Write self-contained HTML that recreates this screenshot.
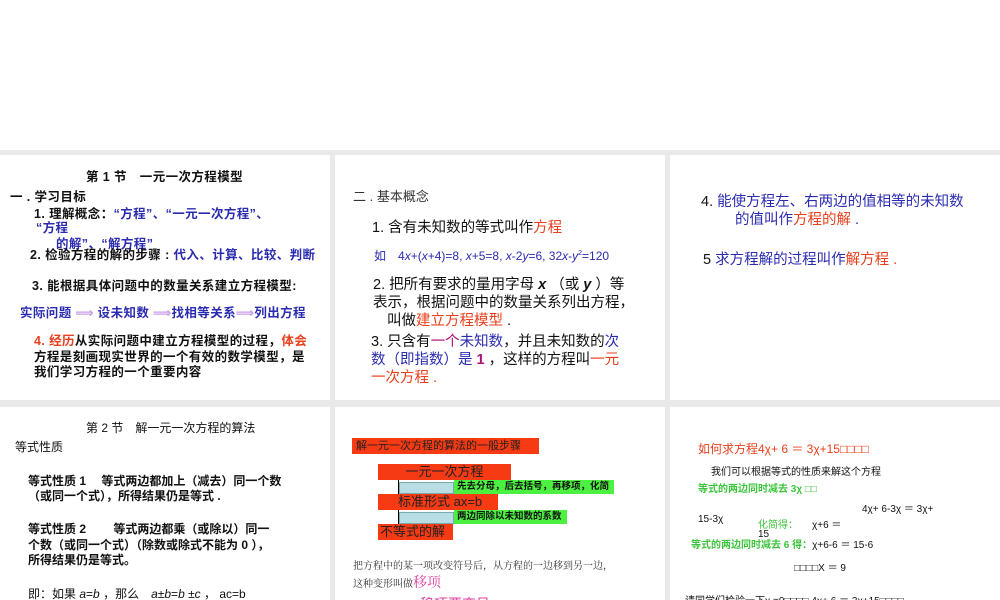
<!DOCTYPE html>
<html><head><meta charset="utf-8"><style>
*{margin:0;padding:0;box-sizing:border-box}
html,body{width:1000px;height:600px;overflow:hidden}
body{position:relative;background:#fff;font-family:"Liberation Sans","Noto Sans CJK SC",sans-serif;}
.bg{position:absolute;left:0;top:150px;width:1000px;height:450px;background:#e9e9e9}
.p{position:absolute;background:#fff;overflow:hidden}
.t{position:absolute;white-space:nowrap;color:#111}
.b{font-weight:bold}
.bl{color:#2b2bb0}
.rd{color:#e8401c}
.gr{color:#3cc43c}
.box{position:absolute;background:#f53a14;color:#222;white-space:nowrap}
.gbox{position:absolute;background:#4cf040;color:#111;font-weight:bold;font-size:9.5px;white-space:nowrap;padding-left:3px;line-height:14px}
.arr{position:absolute;height:12px;background:#b8dde4;border:1px solid #7aa}
.p1 .t{font-size:12.5px;letter-spacing:0.4px}
</style></head><body>
<div class="bg"></div>
<div class="p p1" style="left:0;top:155px;width:330px;height:245px">
<div class="t b" style="left:86px;top:11px">第 1 节　一元一次方程模型</div>
<div class="t b" style="left:10px;top:31px">一 . 学习目标</div>
<div class="t b" style="left:34px;top:48px">1. 理解概念：<span class="bl">“方程”、“一元一次方程”、</span></div>
<div class="t b bl" style="left:36px;top:62px">“方程</div>
<div class="t b bl" style="left:56px;top:78px">的解”、“解方程”</div>
<div class="t b" style="left:30px;top:89px">2. 检验方程的解的步骤 : <span class="bl">代入、计算、比较、判断</span></div>
<div class="t b" style="left:32px;top:120px">3. 能根据具体问题中的数量关系建立方程模型:</div>
<div class="t b bl" style="left:20px;top:147px">实际问题 <span style="color:#c8a0e8">⟹</span> 设未知数 <span style="color:#c8a0e8">⟹</span>找相等关系<span style="color:#c8a0e8">⟹</span>列出方程</div>
<div class="t b" style="left:34px;top:175px"><span class="rd">4. 经历</span>从实际问题中建立方程模型的过程，<span class="rd">体会</span></div>
<div class="t b" style="left:34px;top:191px">方程是刻画现实世界的一个有效的数学模型，是</div>
<div class="t b" style="left:34px;top:206px">我们学习方程的一个重要内容</div>
</div>
<div class="p" style="left:335px;top:155px;width:330px;height:245px"></div>
<div class="p" style="left:670px;top:155px;width:330px;height:245px"></div>
<div class="p" style="left:0;top:407px;width:330px;height:193px"></div>
<div class="p" style="left:335px;top:407px;width:330px;height:193px"></div>
<div class="p" style="left:670px;top:407px;width:330px;height:193px"></div>

<!-- panel 2 -->
<div class="t" style="left:353px;top:186px;font-size:13px;color:#333">二 . 基本概念</div>
<div class="t" style="left:372px;top:216px;font-size:14.5px">1. 含有未知数的等式叫作<span class="rd">方程</span></div>
<div class="t bl" style="left:374px;top:247px;font-size:12px">如　4<i>x</i>+(<i>x</i>+4)=8, <i>x</i>+5=8, <i>x</i>-2<i>y</i>=6, 32<i>x</i>-<i>y</i><sup style="font-size:7px">2</sup>=120</div>
<div class="t" style="left:373px;top:273px;font-size:14.5px">2. 把所有要求的量用字母 <b><i>x</i></b> （或 <b><i>y</i></b> ）等</div>
<div class="t" style="left:373px;top:291px;font-size:14.5px">表示，根据问题中的数量关系列出方程，</div>
<div class="t" style="left:387px;top:309px;font-size:14.5px">叫做<span class="rd">建立方程模型</span> .</div>
<div class="t" style="left:371px;top:330px;font-size:14.5px">3. 只含有<span style="color:#b0107a">一个</span><span class="bl">未知数</span>，并且未知数的<span class="bl">次</span></div>
<div class="t" style="left:371px;top:348px;font-size:14.5px"><span class="bl">数（即指数）是</span> <b style="color:#b0107a">1</b> ，这样的方程叫<span class="rd">一元</span></div>
<div class="t rd" style="left:371px;top:366px;font-size:14.5px">一次方程 .</div>

<!-- panel 3 -->
<div class="t" style="left:701px;top:190px;font-size:14.5px">4. <span class="bl">能使方程左、右两边的值相等的未知数</span></div>
<div class="t bl" style="left:735px;top:208px;font-size:14.5px">的值叫作<span class="rd">方程的解</span> .</div>
<div class="t" style="left:703px;top:248px;font-size:14.5px">5 <span class="bl">求方程解的过程叫作</span><span class="rd">解方程 .</span></div>

<!-- panel 4 -->
<div class="t" style="left:86px;top:419px;font-size:12px">第 2 节　解一元一次方程的算法</div>
<div class="t" style="left:15px;top:438px;font-size:12px">等式性质</div>
<div class="t b" style="left:28px;top:472px;font-size:12px">等式性质 1　 等式两边都加上（减去）同一个数</div>
<div class="t b" style="left:28px;top:487px;font-size:12px">（或同一个式），所得结果仍是等式 .</div>
<div class="t b" style="left:28px;top:520px;font-size:12px">等式性质 2　　 等式两边都乘（或除以）同一</div>
<div class="t b" style="left:28px;top:536px;font-size:12px">个数（或同一个式）（除数或除式不能为 0 ），</div>
<div class="t b" style="left:28px;top:551px;font-size:12px">所得结果仍是等式。</div>
<div class="t" style="left:28px;top:585px;font-size:12px">即：如果 <i>a</i>=<i>b</i> ，那么　<i>a</i>±<i>b</i>=<i>b</i> ±<i>c</i> ，  ac=b</div>

<!-- panel 5 -->
<div class="box" style="left:352px;top:438px;width:187px;height:16px;font-size:11px;line-height:16px;padding-left:4px">解一元一次方程的算法的一般步骤</div>
<div class="box" style="left:378px;top:464px;width:133px;height:16px;font-size:13px;line-height:16px;text-align:center">一元一次方程</div>
<div style="position:absolute;left:398px;top:480px;width:1px;height:15px;background:#000"></div>
<div class="arr" style="left:399px;top:482px;width:55px"></div>
<div class="gbox" style="left:454px;top:480px;width:160px;height:14px">先去分母，后去括号，再移项，化简</div>
<div class="box" style="left:378px;top:494px;width:120px;height:16px;font-size:13px;line-height:16px;padding-left:20px">标准形式 ax=b</div>
<div style="position:absolute;left:398px;top:510px;width:1px;height:15px;background:#000"></div>
<div class="arr" style="left:399px;top:512px;width:55px"></div>
<div class="gbox" style="left:454px;top:510px;width:113px;height:14px">两边同除以未知数的系数</div>
<div class="box" style="left:378px;top:524px;width:75px;height:16px;font-size:13px;line-height:16px;padding-left:2px">不等式的解</div>
<div class="t" style="left:353px;top:557px;font-size:10px;color:#333;font-family:'Liberation Serif','Noto Serif CJK SC',serif">把方程中的某一项改变符号后，从方程的一边移到另一边，</div>
<div class="t" style="left:353px;top:572px;font-size:10px;color:#333;font-family:'Liberation Serif','Noto Serif CJK SC',serif">这种变形叫做<span style="font-size:14px;color:#e040a0">移项</span></div>
<div class="t" style="left:420px;top:594px;font-size:14px;color:#e040a0">移项要变号</div>

<!-- panel 6 -->
<div class="t rd" style="left:698px;top:440px;font-size:12px">如何求方程4χ+ 6 ＝ 3χ+15□□□□</div>
<div class="t" style="left:711px;top:463px;font-size:10px">我们可以根据等式的性质来解这个方程</div>
<div class="t gr b" style="left:698px;top:480px;font-size:10px">等式的两边同时减去 3χ □□</div>
<div class="t" style="left:862px;top:500px;font-size:10px">4χ+ 6-3χ ＝ 3χ+</div>
<div class="t" style="left:698px;top:514px;font-size:10px">15-3χ</div>
<div class="t gr" style="left:758px;top:516px;font-size:10px">化简得：</div>
<div class="t" style="left:812px;top:516px;font-size:10px">χ+6 ＝</div>
<div class="t" style="left:758px;top:529px;font-size:10px">15</div>
<div class="t gr b" style="left:691px;top:536px;font-size:10px">等式的两边同时减去 6 得：<span style="color:#111;font-weight:normal">χ+6-6 ＝ 15-6</span></div>
<div class="t" style="left:794px;top:559px;font-size:10px">□□□□X ＝ 9</div>
<div class="t" style="left:685px;top:592px;font-size:10px">请同学们检验一下χ =9□□□□ 4χ+ 6 ＝ 3χ+15□□□□</div>
</body></html>
